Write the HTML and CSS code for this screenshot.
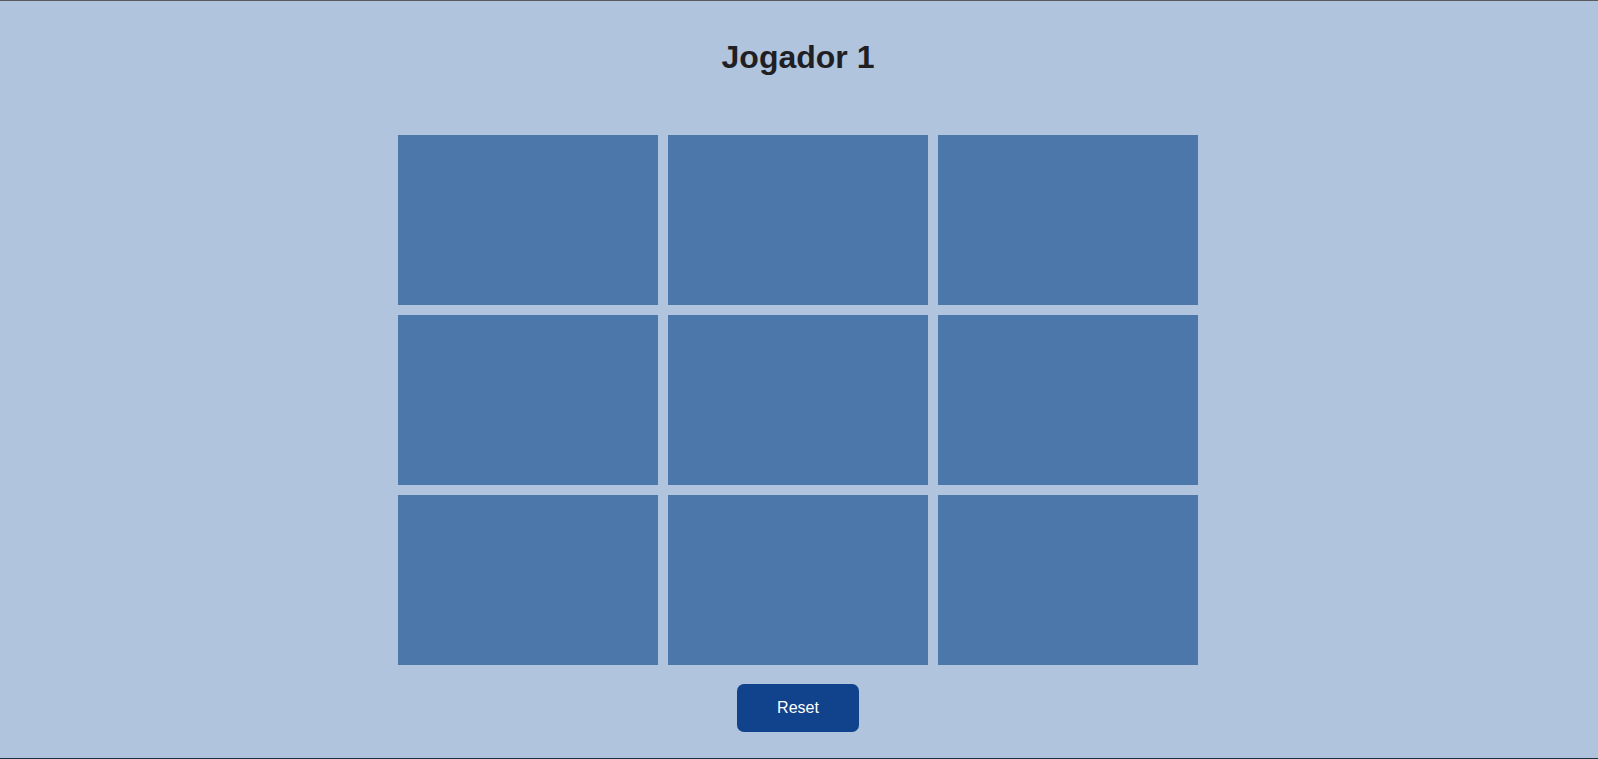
FILE: index.html
```html
<!DOCTYPE html>
<html lang="pt">
<head>
<meta charset="utf-8">
<title>Jogo da Velha</title>
<link rel="stylesheet" href="styles.css">
</head>
<body>
<div class="page">
  <h1 class="status">Jogador 1</h1>
  <div class="board">
    <div class="cell"></div>
    <div class="cell"></div>
    <div class="cell"></div>
    <div class="cell"></div>
    <div class="cell"></div>
    <div class="cell"></div>
    <div class="cell"></div>
    <div class="cell"></div>
    <div class="cell"></div>
  </div>
  <button class="reset" type="button">Reset</button>
</div>
</body>
</html>
```
FILE: styles.css
```css
html, body {
  margin: 0;
  padding: 0;
  background: #b0c4de;
}

body {
  font-family: "Liberation Sans", Arial, sans-serif;
  overflow: hidden;
}

.page {
  min-height: 100vh;
  box-sizing: border-box;
  padding-right: 2px;
  border-top: 1px solid #5a5a5a;
  border-bottom: 1px solid #1b3246;
  display: flex;
  flex-direction: column;
  align-items: center;
}

.status {
  margin: 38px 0 59px;
  font-size: 32px;
  font-weight: bold;
  line-height: 37px;
  color: #1f1f24;
  text-align: center;
}

.board {
  display: grid;
  grid-template-columns: repeat(3, 260px);
  grid-template-rows: repeat(3, 170px);
  gap: 10px;
}

.cell {
  background: #4c77ab;
}

.reset {
  margin-top: 19px;
  width: 122px;
  height: 48px;
  border: none;
  border-radius: 7px;
  background: #10438b;
  color: #ffffff;
  font-family: "Liberation Sans", Arial, sans-serif;
  font-size: 16px;
  cursor: pointer;
}
```
